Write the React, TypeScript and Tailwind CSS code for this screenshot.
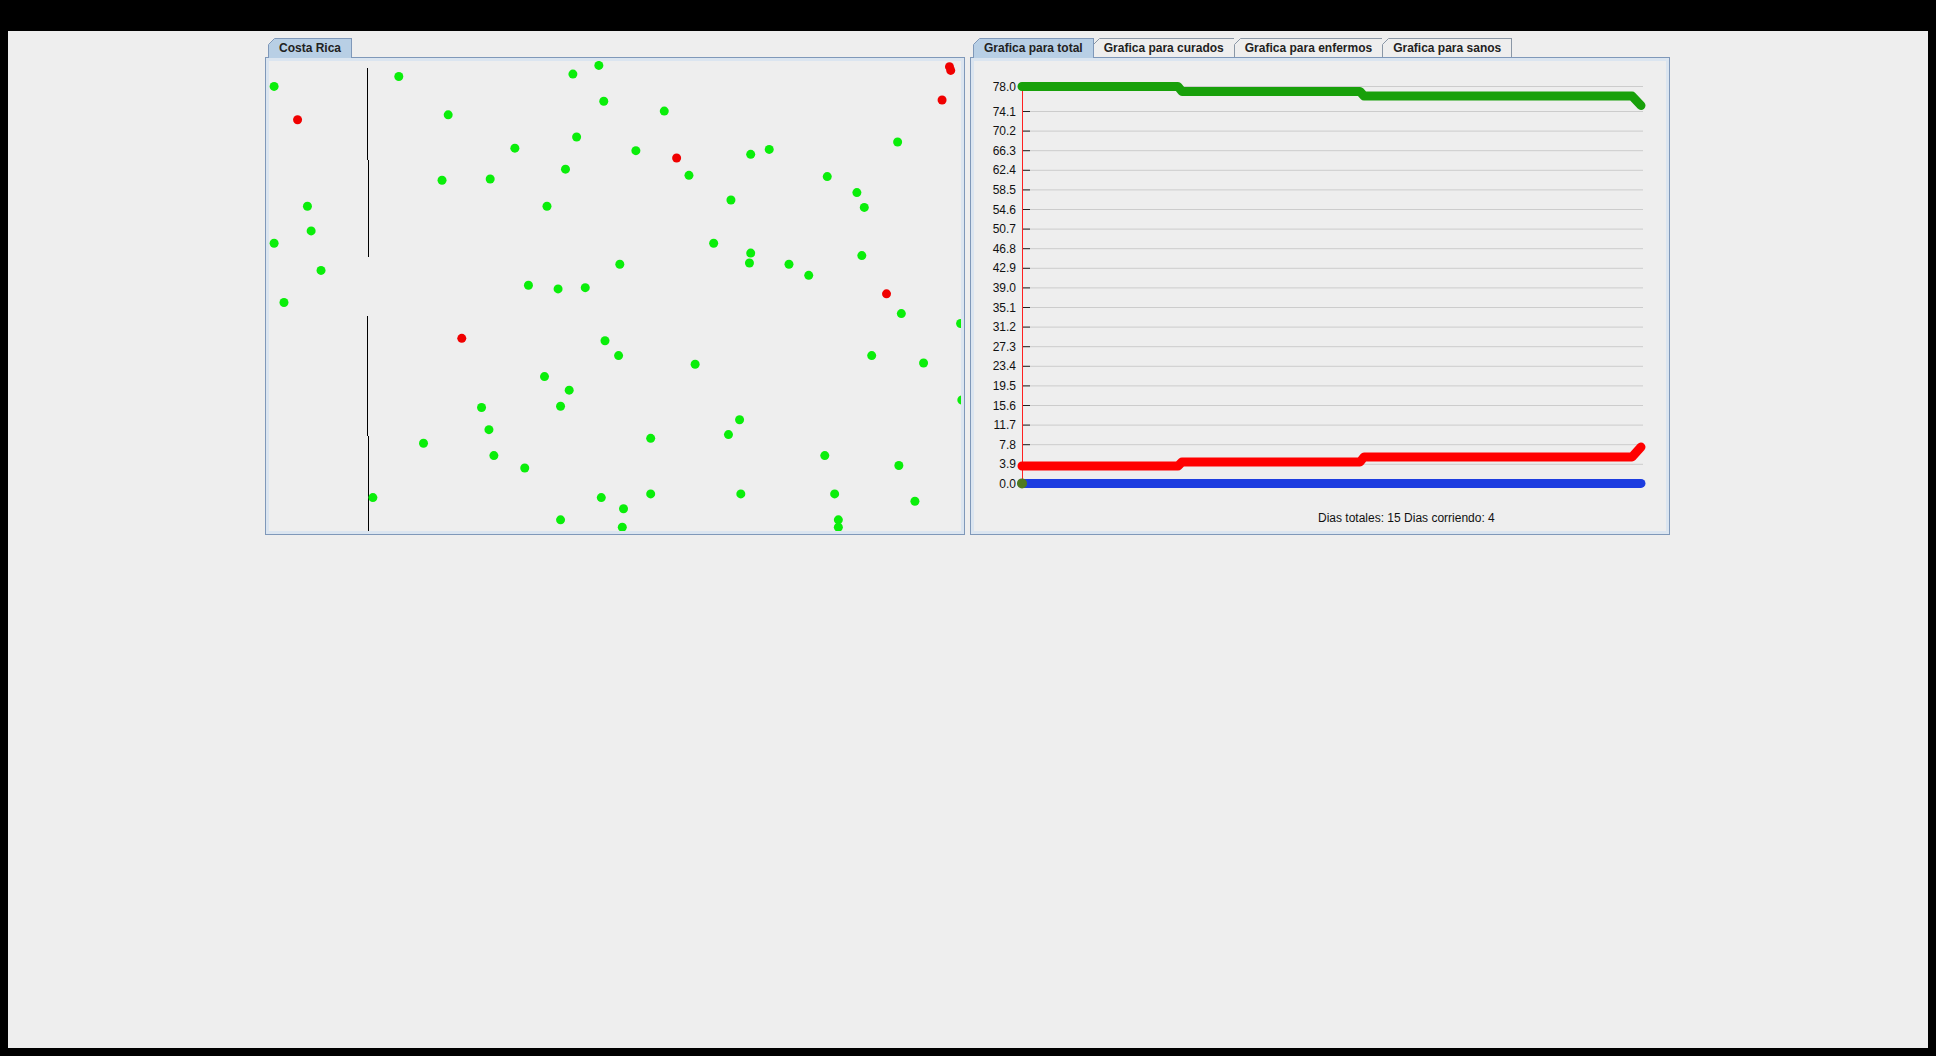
import { ReactNode } from "react";

// scale from the measured (shrunk) reference to real pixels
const S = 1.2347;

const greenDots: [number, number][] = [
  [222, 70], [323, 62], [464, 60], [485, 53], [363, 93], [489, 82], [538, 90],
  [467, 111], [417, 120], [515, 122], [608, 125], [623, 121], [727, 115],
  [458, 137], [358, 146], [397, 145], [558, 142], [670, 143], [694, 156],
  [700, 168], [592, 162], [443, 167], [249, 167], [252, 187], [222, 197],
  [578, 197], [608, 205], [607, 213], [698, 207], [502, 214], [639, 214],
  [655, 223], [260, 219], [428, 231], [452, 234], [474, 233], [230, 245],
  [730, 254], [778, 262], [490, 276], [501, 288], [706, 288], [563, 295],
  [748, 294], [441, 305], [461, 316], [390, 330], [454, 329], [779, 324],
  [599, 340], [396, 348], [343, 359], [527, 355], [590, 352], [668, 369],
  [400, 369], [728, 377], [425, 379], [302, 403], [487, 403], [527, 400],
  [600, 400], [676, 400], [741, 406], [505, 412], [454, 421], [679, 421],
  [504, 427], [679, 427],
];

const redDots: [number, number][] = [
  [769, 54], [770, 57], [241, 97], [763, 81], [548, 128], [718, 238], [374, 274],
];

const yLabels = [
  "74.1", "70.2", "66.3", "62.4", "58.5", "54.6", "50.7", "46.8", "42.9", "39.0",
  "35.1", "31.2", "27.3", "23.4", "19.5", "15.6", "11.7", "7.8", "3.9", "0.0",
];

const Tab = ({ label, selected }: { label: string; selected?: boolean }) => (
  <div
    className={
      selected
        ? "relative z-10 -mb-px h-[20px] -ml-px first:ml-0 flex items-start pt-[2px] px-[10px] border-t border-l border-r border-[#7f98b9] bg-[#b8cfe5] text-[12px] font-bold text-[#222] leading-[15px] whitespace-nowrap"
        : "relative h-[19px] -ml-px first:ml-0 flex items-start pt-[2px] px-[10px] border-t border-l border-r border-[#8a97a6] bg-[#eeeeee] text-[12px] font-bold text-[#222] leading-[15px] whitespace-nowrap"
    }
  >
    <svg className="absolute -left-px -top-px" width="7" height="7" viewBox="0 0 7 7">
      <polygon points="0,0 7,0 0,7" fill="#eeeeee" />
      <line x1="0.5" y1="6.5" x2="6.5" y2="0.5" stroke={selected ? "#7f98b9" : "#8a97a6"} />
    </svg>
    {label}
  </div>
);

const TabPane = ({ tabs, children }: { tabs: string[]; children: ReactNode }) => (
  <div className="flex w-[700px] flex-col">
    <div className="flex h-[19px] items-end pl-[3px]">
      {tabs.map((t, i) => (
        <Tab key={t} label={t} selected={i === 0} />
      ))}
    </div>
    <div className="flex h-[478px] flex-col border border-[#7f98b9] bg-[#eeeeee]">
      <div className="flex flex-1 flex-col border-[3px] border-[#dbe5f0]">
        <div className="relative flex-1 overflow-hidden bg-[#eeeeee]">{children}</div>
      </div>
    </div>
  </div>
);

const Map = () => (
  <svg className="absolute inset-0" width="692" height="470">
    {/* origin of this box sits at page (269, 61) */}
    <g stroke="#000" strokeWidth="1">
      <line x1="98.5" y1="7" x2="98.5" y2="99" />
      <line x1="99.5" y1="99" x2="99.5" y2="196" />
      <line x1="98.5" y1="255" x2="98.5" y2="375" />
      <line x1="99.5" y1="375" x2="99.5" y2="471" />
    </g>
    {greenDots.map(([x, y], i) => (
      <circle key={"g" + i} cx={x * S - 269} cy={y * S - 61} r="4.5" fill="#0aee0a" />
    ))}
    {redDots.map(([x, y], i) => (
      <circle key={"r" + i} cx={x * S - 269} cy={y * S - 61} r="4.5" fill="#f00000" />
    ))}
  </svg>
);

const Chart = () => {
  const gy = (i: number) => 50 + i * 19.6;
  return (
    <>
      <svg className="absolute inset-0 font-['Liberation_Sans',Arial,sans-serif]" width="692" height="470">
        {/* origin of this box sits at page (974, 61) */}
        <line x1="48" y1="25.5" x2="669" y2="25.5" stroke="#cccccc" />
        <line x1="48" y1="25.5" x2="56" y2="25.5" stroke="#222" />
        <text x="42" y="29.5" textAnchor="end" fontSize="12" fill="#111">78.0</text>
        {yLabels.map((l, i) => (
          <g key={l}>
            <line x1="48" y1={gy(i) + 0.5} x2="669" y2={gy(i) + 0.5} stroke="#cccccc" />
            <line x1="48" y1={gy(i) + 0.5} x2="56" y2={gy(i) + 0.5} stroke="#222" />
            <text x="42" y={gy(i) + 4.5} textAnchor="end" fontSize="12" fill="#111">
              {l}
            </text>
          </g>
        ))}
        <line x1="48.5" y1="25" x2="48.5" y2="423" stroke="#ff2020" />
        <polyline
          points="48,25.5 204,25.5 208,30.5 386,30.5 390,35 658,35 667,44.5"
          fill="none"
          stroke="#18a00a"
          strokeWidth="9"
          strokeLinecap="round"
          strokeLinejoin="round"
        />
        <polyline
          points="48,405 204,405 208,401 386,401 390,396 658,396 667,386"
          fill="none"
          stroke="#ff0000"
          strokeWidth="9"
          strokeLinecap="round"
          strokeLinejoin="round"
        />
        <line x1="48" y1="422.4" x2="667" y2="422.4" stroke="#1c3ce0" strokeWidth="9" strokeLinecap="round" />
        <circle cx="48" cy="422.4" r="5" fill="#4f7a1e" />
      </svg>
      <div className="absolute left-[344px] top-[449px] text-[12px] leading-[16px] text-[#111] whitespace-nowrap">
        Dias totales: 15 Dias corriendo: 4
      </div>
    </>
  );
};

export default function App() {
  return (
    <div className="h-[1056px] w-full bg-black px-2 pb-2 pt-[31px] font-['Liberation_Sans',Arial,sans-serif]">
      <div className="h-full w-full bg-[#eeeeee] pl-[257px] pt-[7px]">
        <div className="flex gap-[5px]">
          <TabPane tabs={["Costa Rica"]}>
            <Map />
          </TabPane>
          <TabPane
            tabs={[
              "Grafica para total",
              "Grafica para curados",
              "Grafica para enfermos",
              "Grafica para sanos",
            ]}
          >
            <Chart />
          </TabPane>
        </div>
      </div>
    </div>
  );
}
